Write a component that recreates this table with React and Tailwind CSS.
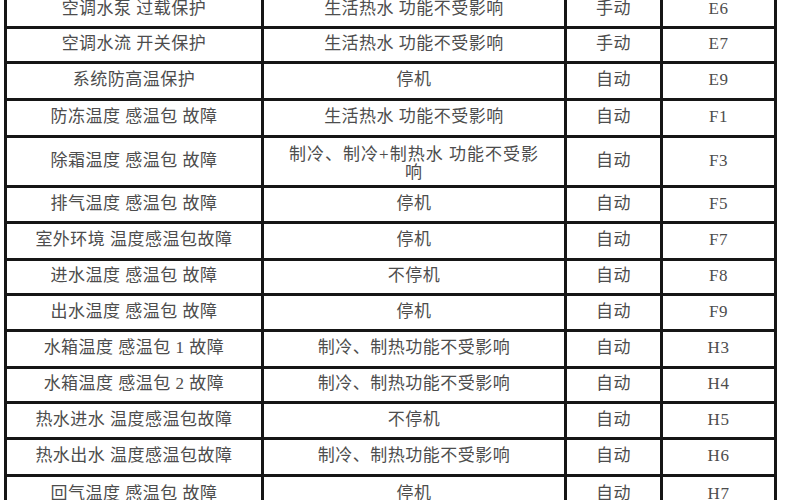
import React from 'react';

const rows = [
  { name: '空调水泵 过载保护', effect: '生活热水 功能不受影响', mode: '手动', code: 'E6', h: 36 },
  { name: '空调水流 开关保护', effect: '生活热水 功能不受影响', mode: '手动', code: 'E7', h: 35 },
  { name: '系统防高温保护', effect: '停机', mode: '自动', code: 'E9', h: 37 },
  { name: '防冻温度 感温包 故障', effect: '生活热水 功能不受影响', mode: '自动', code: 'F1', h: 37 },
  { name: '除霜温度 感温包 故障', effect: ['制冷、制冷+制热水 功能不受影', '响'], mode: '自动', code: 'F3', h: 50 },
  { name: '排气温度 感温包 故障', effect: '停机', mode: '自动', code: 'F5', h: 36 },
  { name: '室外环境 温度感温包故障', effect: '停机', mode: '自动', code: 'F7', h: 37 },
  { name: '进水温度 感温包 故障', effect: '不停机', mode: '自动', code: 'F8', h: 35 },
  { name: '出水温度 感温包 故障', effect: '停机', mode: '自动', code: 'F9', h: 36 },
  { name: '水箱温度 感温包 1 故障', effect: '制冷、制热功能不受影响', mode: '自动', code: 'H3', h: 37 },
  { name: '水箱温度 感温包 2 故障', effect: '制冷、制热功能不受影响', mode: '自动', code: 'H4', h: 35 },
  { name: '热水进水 温度感温包故障', effect: '不停机', mode: '自动', code: 'H5', h: 36 },
  { name: '热水出水 温度感温包故障', effect: '制冷、制热功能不受影响', mode: '自动', code: 'H6', h: 37 },
  { name: '回气温度 感温包 故障', effect: '停机', mode: '自动', code: 'H7', h: 38 },
];

const cell = 'border-[3px] border-[#161616] text-center align-middle pb-[3px] leading-[19px]';

export default function App() {
  return (
    <div className="w-[800px] h-[500px] overflow-hidden bg-white">
      <div className="pl-[4px] mt-[-10px]">
        <table
          className="table-fixed border-collapse text-[17px] text-[#4d4d4d] tracking-[0.5px] font-['Liberation_Serif','Noto_Sans_CJK_SC',serif]"
          style={{ width: 770 }}
        >
          <colgroup>
            <col className="w-[257px]" />
            <col className="w-[303px]" />
            <col className="w-[96px]" />
            <col className="w-[114px]" />
          </colgroup>
          <tbody>
            {rows.map((r) => (
              <tr key={r.code} style={{ height: r.h }}>
                <td className={cell}>{r.name}</td>
                {Array.isArray(r.effect) ? (
                  <td className="border-[3px] border-[#161616] text-center align-middle pt-[4px] leading-[18px] tracking-[1px]">
                    {r.effect[0]}
                    <br />
                    {r.effect[1]}
                  </td>
                ) : (
                  <td className={cell}>{r.effect}</td>
                )}
                <td className={cell}>{r.mode}</td>
                <td className={cell}>{r.code}</td>
              </tr>
            ))}
          </tbody>
        </table>
      </div>
    </div>
  );
}
